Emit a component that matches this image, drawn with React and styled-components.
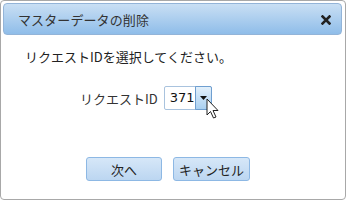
import styled, { createGlobalStyle } from "styled-components";

const Global = createGlobalStyle`
  html, body {
    margin: 0;
    padding: 0;
    background: #ffffff;
  }
  body {
    font-family: "Noto Sans CJK JP", "Noto Sans", sans-serif;
    font-size: 13px;
    color: #222;
  }
`;

const Dialog = styled.div`
  box-sizing: border-box;
  width: 346px;
  height: 200px;
  border: 1px solid #a8a8a8;
  border-radius: 4px;
  padding: 2px;
  display: flex;
  flex-direction: column;
  background: #fff;
`;

const TitleBar = styled.div`
  box-sizing: border-box;
  height: 32px;
  margin-right: 1px;
  border: 1px solid #93b4d8;
  border-radius: 4px;
  background: linear-gradient(#c9dff4, #8fbde9);
  display: flex;
  align-items: center;
  justify-content: space-between;
  padding: 0 10px 0 14px;
`;

const Title = styled.span`
  font-size: 13px;
  color: #333;
  letter-spacing: 0.1px;
`;

const CloseBtn = styled.svg`
  width: 10px;
  height: 10px;
  margin-top: 1px;
`;

const Body = styled.div`
  display: flex;
  flex-direction: column;
  padding: 13px 0 0 22px;
`;

const Message = styled.div`
  font-size: 13px;
  color: #222;
  line-height: 18px;
`;

const FieldRow = styled.div`
  display: flex;
  align-items: center;
  margin-top: 20px;
  padding-left: 55px;
  gap: 6px;
`;

const Label = styled.span`
  font-size: 13px;
  color: #333;
`;

const SelectWrap = styled.div`
  position: relative;
  box-sizing: border-box;
  width: 48px;
  height: 24px;
  border: 1px solid #a9c3de;
  border-radius: 2px;
  display: flex;
  background: #fff;
`;

const SelectValue = styled.span`
  flex: 1;
  font-family: "DejaVu Sans", sans-serif;
  font-size: 13px;
  color: #111;
  padding-left: 5px;
  line-height: 21px;
`;

const DropButton = styled.div`
  width: 16px;
  margin: -1px -1px -1px 0;
  border: 1px solid #6f9fd0;
  border-radius: 0 2px 2px 0;
  background: linear-gradient(#e3f0fb, #a9d0f1);
  display: flex;
  align-items: center;
  justify-content: center;
`;

const Cursor = styled.svg`
  position: absolute;
  left: 41px;
  top: 11px;
  width: 14px;
  height: 22px;
`;

const Buttons = styled.div`
  display: flex;
  gap: 11px;
  margin-top: auto;
  margin-bottom: 16px;
  padding-left: 83px;
`;

const Button = styled.button`
  box-sizing: border-box;
  width: ${(p) => p.$w}px;
  height: 24px;
  border: 1px solid #8db8e4;
  border-radius: 3px;
  background: linear-gradient(#d6e7f8, #bcd6f1);
  font-family: "Noto Sans CJK JP", "Noto Sans", sans-serif;
  font-size: 13px;
  color: #222;
  padding: 0;
  display: flex;
  align-items: center;
  justify-content: center;
`;

export default function App() {
  return (
    <>
      <Global />
      <Dialog>
        <TitleBar>
          <Title>マスターデータの削除</Title>
          <CloseBtn viewBox="0 0 10 10">
            <path d="M1.5 1.5 L8.5 8.5 M8.5 1.5 L1.5 8.5" stroke="#222" strokeWidth="2.6" strokeLinecap="square" />
          </CloseBtn>
        </TitleBar>
        <Body>
          <Message>リクエストIDを選択してください。</Message>
          <FieldRow>
            <Label>リクエストID</Label>
            <SelectWrap>
              <SelectValue>371</SelectValue>
              <DropButton>
                <svg width="7" height="4" viewBox="0 0 7 4">
                  <path d="M0 0 H7 L3.5 4 Z" fill="#111" />
                </svg>
              </DropButton>
              <Cursor viewBox="0 0 14 22">
                <path
                  d="M1 1 L1 17 L4.5 13.5 L7.5 20 L10 19 L7 12.5 L12 12.5 Z"
                  fill="#fff"
                  stroke="#222"
                  strokeWidth="1"
                  strokeLinejoin="round"
                />
              </Cursor>
            </SelectWrap>
          </FieldRow>
        </Body>
        <Buttons>
          <Button $w={76}>次へ</Button>
          <Button $w={77}>キャンセル</Button>
        </Buttons>
      </Dialog>
    </>
  );
}
